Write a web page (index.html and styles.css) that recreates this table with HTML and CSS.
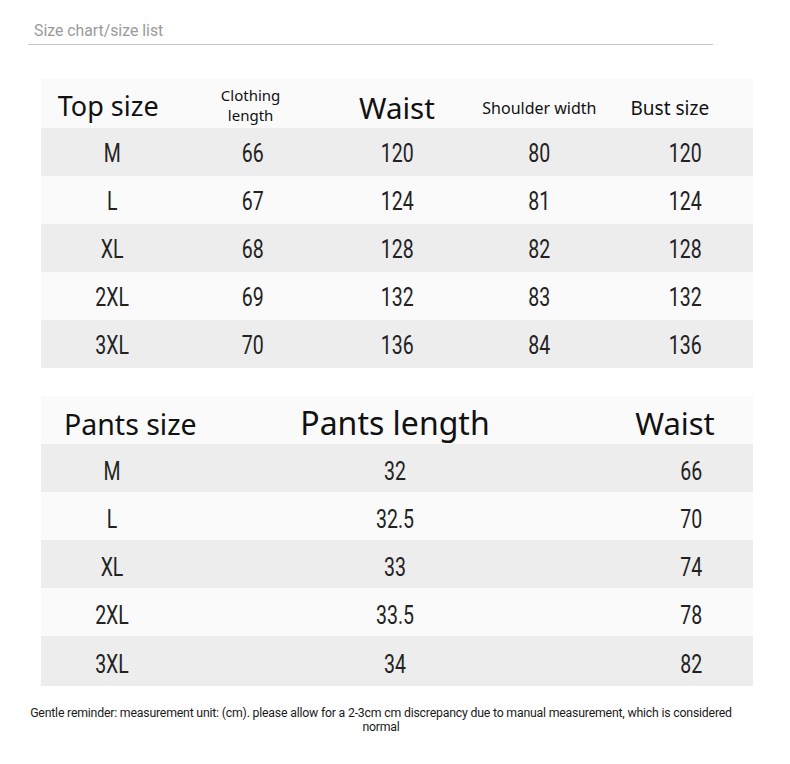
FILE: index.html
```html
<!DOCTYPE html>
<html>
<head>
<meta charset="utf-8">
<link rel="stylesheet" href="styles.css">
</head>
<body>
<div class="page">
  <div class="title-bar"><span class="title">Size chart/size list</span></div>

  <div class="table top">
    <div class="row head">
      <div class="cell h-top">Top size</div>
      <div class="cell h-small h-cloth">Clothing<br>length</div>
      <div class="cell h-waist">Waist</div>
      <div class="cell h-small h-shoulder">Shoulder width</div>
      <div class="cell h-bust">Bust size</div>
    </div>
    <div class="row odd"><div class="cell">M</div><div class="cell c2">66</div><div class="cell">120</div><div class="cell">80</div><div class="cell c5">120</div></div>
    <div class="row even"><div class="cell">L</div><div class="cell c2">67</div><div class="cell">124</div><div class="cell">81</div><div class="cell c5">124</div></div>
    <div class="row odd"><div class="cell">XL</div><div class="cell c2">68</div><div class="cell">128</div><div class="cell">82</div><div class="cell c5">128</div></div>
    <div class="row even"><div class="cell">2XL</div><div class="cell c2">69</div><div class="cell">132</div><div class="cell">83</div><div class="cell c5">132</div></div>
    <div class="row odd"><div class="cell">3XL</div><div class="cell c2">70</div><div class="cell">136</div><div class="cell">84</div><div class="cell c5">136</div></div>
  </div>

  <div class="table pants">
    <div class="row head">
      <div class="cell h-pants">Pants size</div>
      <div class="cell h-plen">Pants length</div>
      <div class="cell h-pwaist">Waist</div>
    </div>
    <div class="row odd"><div class="cell">M</div><div class="cell">32</div><div class="cell p3">66</div></div>
    <div class="row even"><div class="cell">L</div><div class="cell">32.5</div><div class="cell p3">70</div></div>
    <div class="row odd"><div class="cell">XL</div><div class="cell">33</div><div class="cell p3">74</div></div>
    <div class="row even"><div class="cell">2XL</div><div class="cell">33.5</div><div class="cell p3">78</div></div>
    <div class="row odd last"><div class="cell">3XL</div><div class="cell">34</div><div class="cell p3">82</div></div>
  </div>

  <p class="note">Gentle reminder: measurement unit: (cm). please allow for a 2-3cm cm discrepancy due to manual measurement, which is considered normal</p>
</div>
</body>
</html>
```

FILE: styles.css
```css
html, body {
  margin: 0;
  padding: 0;
  background: #ffffff;
}

.page {
  width: 790px;
  padding-top: 21px;
}

.title-bar {
  margin-left: 28px;
  width: 685px;
  border-bottom: 1px solid #c8c8c8;
  padding-left: 6px;
  box-sizing: border-box;
  height: 24px;
}

.title {
  display: inline-block;
  font-family: Roboto, sans-serif;
  font-size: 15.8px;
  line-height: 18px;
  color: #9a9a9a;
  margin-top: 1px;
}

.table {
  margin-left: 41px;
  width: 712px;
}

.table.top {
  margin-top: 34px;
}

.table.pants {
  margin-top: 28px;
}

.row {
  display: grid;
  height: 48px;
  align-items: center;
}

.row.last {
  height: 50px;
}

.top .row {
  grid-template-columns: repeat(5, 1fr);
}

.pants .row {
  grid-template-columns: 142px 424px 146px;
}

.row.head {
  background: #fafafa;
}

.top .row.head {
  height: 49px;
}

.row.odd {
  background: #ededed;
}

.row.even {
  background: #fafafa;
}

.cell {
  text-align: center;
  font-family: Roboto, sans-serif;
  font-size: 25px;
  color: #222222;
  line-height: 28px;
  padding-top: 4px;
  transform: scaleX(0.78);
}

.pants .cell {
  padding-top: 8px;
}

.cell.c2 {
  padding-right: 4px;
}

.cell.c5 {
  padding-left: 8px;
}

.pants .cell.p3 {
  padding-left: 29px;
}

.head .cell {
  font-family: "Noto Sans", "Open Sans", sans-serif;
  color: #111111;
  transform: none;
  padding-top: 0;
}

.top .head .h-top {
  font-size: 27px;
  line-height: 34px;
  padding-right: 8px;
  padding-top: 5px;
}

.h-small {
  font-size: 15px;
  line-height: 20px;
}

.top .head .h-cloth {
  padding-right: 8px;
  padding-top: 3px;
}

.top .head .h-shoulder {
  font-size: 16px;
  padding-top: 8px;
}

.top .head .h-waist {
  font-size: 29.5px;
  line-height: 36px;
  padding-top: 8px;
}

.top .head .h-bust {
  font-size: 19px;
  line-height: 24px;
  padding-right: 24px;
  padding-top: 8px;
}

.pants .head .h-pants {
  font-size: 28.5px;
  line-height: 36px;
  padding-left: 23px;
  text-align: left;
  white-space: nowrap;
  padding-top: 8px;
}

.pants .head .h-plen {
  font-size: 32px;
  line-height: 38px;
  padding-top: 6px;
}

.pants .head .h-pwaist {
  font-size: 31px;
  line-height: 38px;
  padding-right: 10px;
  padding-top: 6px;
}

.note {
  margin: 20px 0 0 18px;
  width: 726px;
  text-align: center;
  font-family: Roboto, sans-serif;
  font-size: 12.3px;
  letter-spacing: -0.2px;
  line-height: 14px;
  color: #1a1a1a;
}
```
